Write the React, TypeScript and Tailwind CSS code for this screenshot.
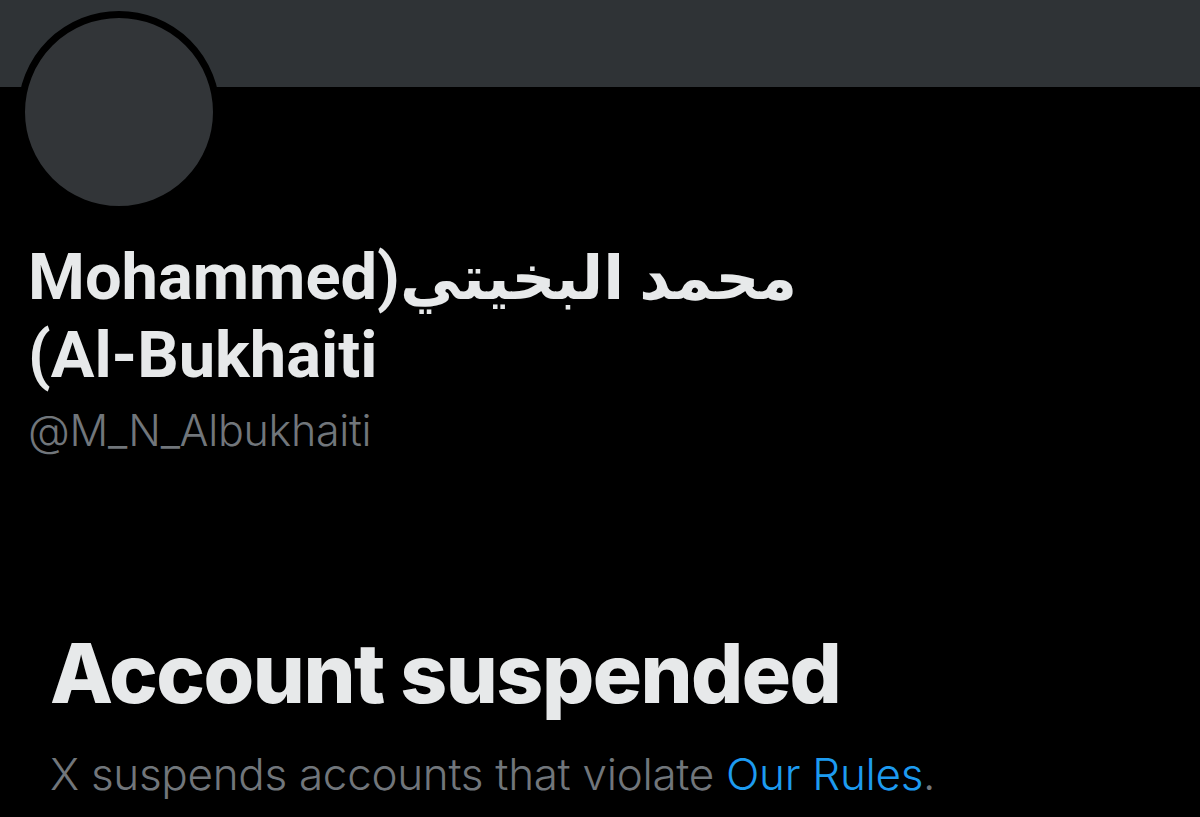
import React from 'react';

const font = { fontFamily: 'Inter, "DejaVu Sans", sans-serif' };
const nameFont = { fontFamily: 'Roboto, "DejaVu Sans", sans-serif' };

export default function App() {
  return (
    <div className="min-h-[817px] w-[1200px] overflow-hidden bg-black" style={font}>
      <div className="h-[87px] bg-[#2f3336]" />
      <div className="relative -mt-[76px] ml-[18px] h-[202px] w-[202px] rounded-full border-[7px] border-black bg-[#323538]" />

      <div
        className="mt-[26px] pl-[28px] text-[65px] font-bold leading-[77px] text-[#e7e9ea]"
        style={nameFont}
      >
        <div dir="rtl" className="text-left">
          <span className="text-[61px]">محمد البخيتي</span>(Mohammed
        </div>
        <div dir="rtl" className="text-left">Al-Bukhaiti)</div>
      </div>
      <div className="mt-[10px] pl-[28px] text-[43px] leading-[52px] font-light tracking-[-0.3px] text-[#71767b]">
        @M_N_Albukhaiti
      </div>

      <div className="mt-[170px] pl-[50px]">
        <h1 className="text-[82px] font-extrabold leading-[96px] tracking-[-1.5px] text-[#e7e9ea]">
          Account suspended
        </h1>
        <p className="mt-[26px] text-[44px] font-light leading-[52px] tracking-[-0.3px] text-[#71767b]">
          X suspends accounts that violate{' '}
          <a href="#" className="text-[#1d9bf0]">Our Rules</a>.
        </p>
      </div>
    </div>
  );
}
